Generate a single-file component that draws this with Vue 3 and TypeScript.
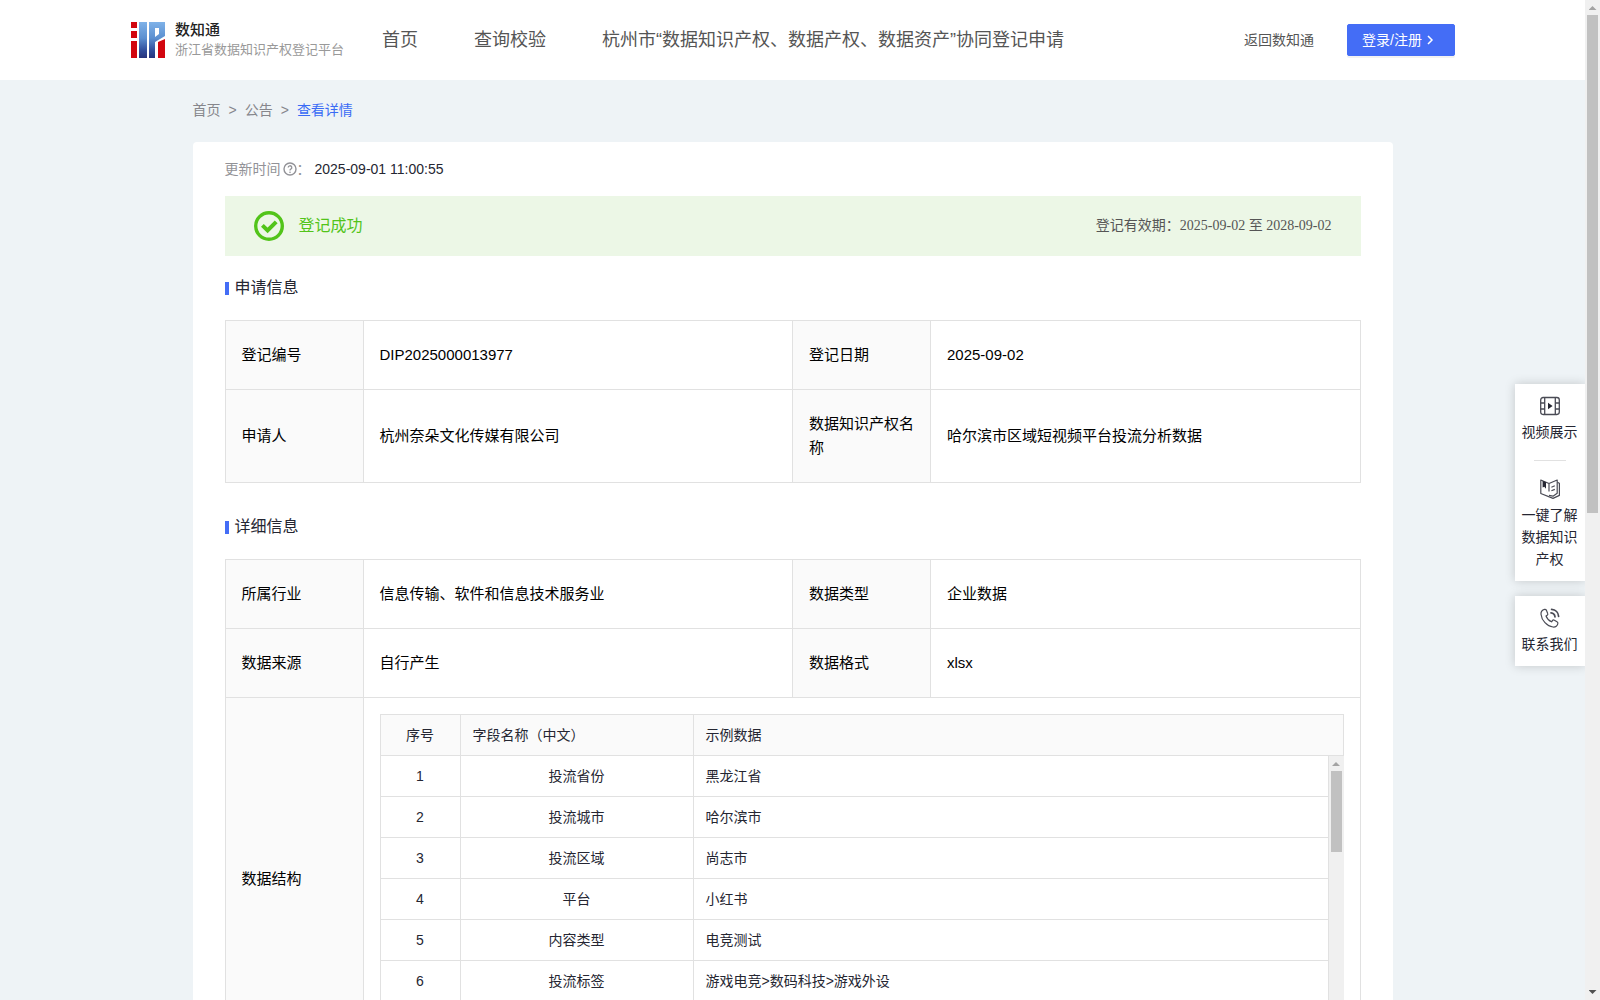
<script setup lang="ts">
interface Pair {
  label: string
  value: string
}

interface Field {
  name: string
  sample: string
}

const navItems: string[] = ['首页', '查询校验', '杭州市“数据知识产权、数据产权、数据资产”协同登记申请']

const applyRows: Pair[][] = [
  [
    { label: '登记编号', value: 'DIP2025000013977' },
    { label: '登记日期', value: '2025-09-02' },
  ],
  [
    { label: '申请人', value: '杭州奈朵文化传媒有限公司' },
    { label: '数据知识产权名称', value: '哈尔滨市区域短视频平台投流分析数据' },
  ],
]

const detailRows: Pair[][] = [
  [
    { label: '所属行业', value: '信息传输、软件和信息技术服务业' },
    { label: '数据类型', value: '企业数据' },
  ],
  [
    { label: '数据来源', value: '自行产生' },
    { label: '数据格式', value: 'xlsx' },
  ],
]

const fields: Field[] = [
  { name: '投流省份', sample: '黑龙江省' },
  { name: '投流城市', sample: '哈尔滨市' },
  { name: '投流区域', sample: '尚志市' },
  { name: '平台', sample: '小红书' },
  { name: '内容类型', sample: '电竞测试' },
  { name: '投流标签', sample: '游戏电竞>数码科技>游戏外设' },
]
</script>

<template>
  <div class="page">
    <div class="view">
      <header class="header">
        <a class="brand" href="#">
          <svg class="logo" viewBox="0 0 34 36" aria-hidden="true">
            <defs>
              <linearGradient id="logo-blue" x1="0" y1="0" x2="0" y2="36" gradientUnits="userSpaceOnUse">
                <stop offset="0" stop-color="#7fb2e8" />
                <stop offset="0.45" stop-color="#5b8fd0" />
                <stop offset="0.8" stop-color="#2f4c9a" />
                <stop offset="1" stop-color="#26337c" />
              </linearGradient>
            </defs>
            <path fill="#d2060f" d="M0 0h6v6H0zM0 9h6v7H0zM0 19h6v17H0zM27 20l7-3v19h-7z" />
            <path fill="url(#logo-blue)" d="M8 0h8v36H8z" />
            <path fill="url(#logo-blue)" fill-rule="evenodd" d="M18 0h16v14l-10 6v16h-6zM24 6v9l4-3V6z" />
          </svg>
          <span class="brand-text">
            <strong>数知通</strong>
            <span>浙江省数据知识产权登记平台</span>
          </span>
        </a>
        <nav class="nav">
          <a v-for="item in navItems" :key="item" href="#">{{ item }}</a>
        </nav>
        <div class="actions">
          <a href="#">返回数知通</a>
          <button type="button" class="login">
            <span>登录/注册</span>
            <svg viewBox="0 0 12 12" aria-hidden="true"><path d="M3 2l4 4-4 4" fill="none" stroke="#fff" stroke-width="1.5" /></svg>
          </button>
        </div>
      </header>

      <main class="main">
        <nav class="crumbs">
          <a href="#">首页</a><span>&gt;</span><a href="#">公告</a><span>&gt;</span><a class="current" href="#">查看详情</a>
        </nav>

        <section class="card">
          <div class="updated">
            <span>更新时间</span>
            <svg viewBox="0 0 14 14" aria-hidden="true">
              <circle cx="7" cy="7" r="6" fill="none" stroke="currentColor" stroke-width="1.4" />
              <path d="M5.2 5.6a1.8 1.8 0 1 1 2.6 1.6Q7 7.6 7 8.5" fill="none" stroke="currentColor" stroke-width="1.3" />
              <circle cx="7" cy="10.2" r="0.8" fill="currentColor" />
            </svg>
            <span>：</span>
            <time>2025-09-01 11:00:55</time>
          </div>

          <div class="status">
            <svg viewBox="0 0 30 30" aria-hidden="true">
              <circle cx="15" cy="15" r="13.3" fill="none" stroke="#52c41a" stroke-width="3.4" />
              <path d="M8.4 14.4l5.200 5 8.600-8.600" fill="none" stroke="#52c41a" stroke-width="4" />
            </svg>
            <span class="status-name">登记成功</span>
            <span class="status-term">登记有效期：2025-09-02 至 2028-09-02</span>
          </div>

          <h2>申请信息</h2>
          <table class="info">
            <colgroup><col class="c-label" /><col /><col class="c-label" /><col /></colgroup>
            <tbody>
              <tr v-for="(row, i) in applyRows" :key="i">
                <template v-for="cell in row" :key="cell.label">
                  <th scope="row">{{ cell.label }}</th>
                  <td>{{ cell.value }}</td>
                </template>
              </tr>
            </tbody>
          </table>

          <h2>详细信息</h2>
          <table class="info">
            <colgroup><col class="c-label" /><col /><col class="c-label" /><col /></colgroup>
            <tbody>
              <tr v-for="(row, i) in detailRows" :key="i">
                <template v-for="cell in row" :key="cell.label">
                  <th scope="row">{{ cell.label }}</th>
                  <td>{{ cell.value }}</td>
                </template>
              </tr>
              <tr>
                <th scope="row">数据结构</th>
                <td class="nest" colspan="3">
                  <table class="fields">
                    <colgroup><col class="c-no" /><col class="c-name" /><col /></colgroup>
                    <thead>
                      <tr><th scope="col">序号</th><th scope="col">字段名称（中文）</th><th scope="col">示例数据</th></tr>
                    </thead>
                  </table>
                  <div class="fields-body">
                    <table class="fields">
                      <colgroup><col class="c-no" /><col class="c-name" /><col /></colgroup>
                      <tbody>
                        <tr v-for="(f, i) in fields" :key="f.name">
                          <td>{{ i + 1 }}</td><td>{{ f.name }}</td><td>{{ f.sample }}</td>
                        </tr>
                      </tbody>
                    </table>
                    <div class="bar" aria-hidden="true">
                      <i class="up"></i><i class="thumb"></i>
                    </div>
                  </div>
                </td>
              </tr>
            </tbody>
          </table>
        </section>
      </main>
    </div>

    <div class="bar page-bar" aria-hidden="true">
      <i class="up"></i><i class="thumb"></i><i class="down"></i>
    </div>

    <aside class="side">
      <div class="side-box">
        <a href="#">
          <svg viewBox="0 0 20 20" fill="none" stroke="#4a4b55" stroke-width="1.3" aria-hidden="true">
            <rect x="0.7" y="1.5" width="18.6" height="17" rx="2.4" />
            <path d="M4.7 1.5v17M15.3 1.5v17M0.7 7h4M0.7 13h4M15.3 7h4M15.3 13h4" />
            <path d="M8 6.8v6.4l4.6-3.2z" fill="#252632" stroke="none" />
          </svg>
          <span>视频展示</span>
        </a>
        <a href="#">
          <svg viewBox="0 0 20 20" fill="none" stroke="#4a4b55" stroke-width="1.2" stroke-linejoin="round" aria-hidden="true">
            <path d="M9 4.500L.8 1v13.500L13 19.400l6.400-3V4.200l-2-.8" />
            <path d="M9 4.500l8.200-3.500v13.200L13 17.200l-4-.8M9 4.500v8M11.400 8.200l3.400-1.400M11.400 11.800l3.400-1.400" />
            <path d="M2.600 1.800L6 3.200v6.600L4.300 7.800 2.600 8.400z" fill="#252632" stroke="none" />
          </svg>
          <span>一键了解数据知识产权</span>
        </a>
      </div>
      <div class="side-box">
        <a href="#">
          <svg viewBox="0 0 20 20" fill="none" stroke="#4a4b55" stroke-width="1.2" stroke-linecap="round" stroke-linejoin="round" aria-hidden="true">
            <path d="M4.600 1.400C2.200 2 .8 3.800 1 6.200c.6 6.200 6 12.200 12 12.800 2.400.2 4.200-1.200 4.800-3.200.4-1-.2-1.600-.8-2l-2.600-1.600c-.8-.4-1.600-.2-2 .4l-.8 1.200c-2.600-1-4.600-3.200-5.600-5.800l1.200-.8c.6-.4.8-1.200.4-2L6.400 2.200c-.4-.6-1-1-1.800-.8z" />
            <path d="M11 4.800c2.200.2 3.800 1.800 4 4M11.600 1.400c4 .2 6.800 3.200 7 7" stroke-width="1.700" />
          </svg>
          <span>联系我们</span>
        </a>
      </div>
    </aside>
  </div>
</template>

<style>
body {
  margin: 0;
  overflow: hidden;
}
</style>

<style scoped>
.page {
  position: relative;
  display: flex;
  height: 100vh;
  background: #eef3f6;
  color: #252632;
  font: 14px/22px "Liberation Sans", "Noto Sans CJK SC", sans-serif;
}
.page *,
.page *::before {
  box-sizing: border-box;
}
a {
  color: inherit;
  text-decoration: none;
}
svg {
  display: block;
  flex: none;
}
.view {
  flex: 1;
  min-width: 0;
  overflow-y: auto;
  scrollbar-width: none;
}
.header {
  display: flex;
  align-items: center;
  height: 80px;
  padding: 0 130px;
  background: #fff;
  color: #555;
  white-space: nowrap;
}
.brand {
  display: flex;
  align-items: center;
  gap: 10px;
  width: 252px;
  padding-left: 1px;
}
.logo {
  width: 34px;
  height: 36px;
}
.brand-text {
  display: flex;
  flex-direction: column;
  color: #999;
  font-size: 13px;
  line-height: 20px;
}
.brand-text strong {
  color: #222;
  font-size: 15px;
  font-weight: 500;
}
.nav {
  display: flex;
  flex: 1;
  gap: 56px;
  font-size: 18px;
}
.actions {
  display: flex;
  align-items: center;
  gap: 33px;
}
.login {
  display: flex;
  align-items: center;
  gap: 3px;
  width: 108px;
  height: 32px;
  padding: 0 14px;
  border: 1px solid #446df6;
  border-radius: 2px;
  background: #446df6;
  box-shadow: 0 2px 0 rgba(0, 0, 0, 0.05);
  color: #fff;
  font: inherit;
  white-space: nowrap;
}
.login svg {
  width: 12px;
  height: 12px;
}
.main {
  max-width: 1200px;
  margin: 0 auto;
}
.crumbs {
  display: flex;
  gap: 8px;
  padding: 19px 0 21px;
  color: #86868c;
}
.crumbs .current {
  color: #3a6bf5;
}
.card {
  padding: 16px 32px 32px;
  border-radius: 4px;
  background: #fff;
}
.updated {
  display: flex;
  align-items: center;
  color: #929297;
}
.updated svg {
  width: 14px;
  height: 14px;
  margin-left: 2px;
}
.updated time {
  margin-left: 4px;
  color: #252632;
}
.status {
  display: flex;
  align-items: center;
  height: 60px;
  margin-top: 16px;
  padding: 0 29px;
  background: #ecf7e6;
}
.status svg {
  width: 30px;
  height: 30px;
}
.status-name {
  flex: 1;
  margin-left: 15px;
  color: #52c41a;
  font-size: 16px;
}
.status-term {
  color: #555;
  font-family: "Liberation Serif", "Noto Sans CJK SC", serif;
}
h2 {
  display: flex;
  align-items: center;
  gap: 6px;
  margin: 20px 0;
  font-size: 16px;
  font-weight: 400;
  line-height: 24px;
}
h2::before {
  width: 4px;
  height: 13px;
  background: #446df6;
  content: "";
}
.info + h2 {
  margin-top: 32px;
}
table {
  width: 100%;
  border-collapse: collapse;
  table-layout: fixed;
}
th,
td {
  border: 1px solid #e1e1e1;
  font-weight: 400;
  text-align: left;
}
.info {
  color: #000;
  font-size: 15px;
  line-height: 24px;
}
.info th,
.info td {
  padding: 22px 16px;
}
.info th {
  background: #fafafa;
}
.c-label {
  width: 138px;
}
.info .nest {
  padding: 16px;
}
.c-no {
  width: 80px;
}
.c-name {
  width: 233px;
}
.fields {
  color: #252632;
  font-size: 14px;
}
.info .fields th,
.info .fields td {
  height: 41px;
  padding: 8px 12px;
}
.info .fields th:first-child,
.info .fields td:first-child,
.info .fields td:nth-child(2) {
  text-align: center;
}
.fields-body {
  display: flex;
  align-items: flex-start;
  height: 287px;
}
.fields-body .fields {
  flex: 1;
}
.info .fields-body tr:first-child td {
  height: 40px;
  padding: 7px 12px;
  border-top: 0;
}
.bar {
  display: flex;
  flex: none;
  flex-direction: column;
  align-items: center;
  align-self: stretch;
  width: 15px;
  background: #f0f0f0;
}
.up,
.down {
  width: 8px;
  height: 4px;
  margin: 6px 0 5px;
  background: #a3a3a3;
  clip-path: polygon(50% 0, 100% 100%, 0 100%);
}
.down {
  margin: auto 0 6px;
  background: #505050;
  clip-path: polygon(0 0, 100% 0, 50% 100%);
}
.thumb {
  width: 11px;
  height: 81px;
  background: #c1c1c1;
}
.page-bar .thumb {
  height: calc(50% - 2px);
}
.side {
  position: absolute;
  top: 384px;
  right: 15px;
  display: flex;
  flex-direction: column;
  gap: 15px;
  width: 70px;
  text-align: center;
}
.side-box {
  padding: 0 7px 0 6px;
  background: #fff;
  box-shadow: 0 0 10px rgba(0, 0, 0, 0.18);
  clip-path: inset(-12px 0 -12px -12px);
}
.side-box a {
  display: flex;
  flex-direction: column;
  align-items: center;
  gap: 5px;
  padding: 12px 0 11px;
}
.side-box a + a::before {
  width: 32px;
  height: 1px;
  margin: 6px 0 13px;
  background: #e1e1e1;
  content: "";
}
.side-box a + a {
  padding-top: 0;
}
.side-box svg {
  width: 20px;
  height: 20px;
}
</style>
